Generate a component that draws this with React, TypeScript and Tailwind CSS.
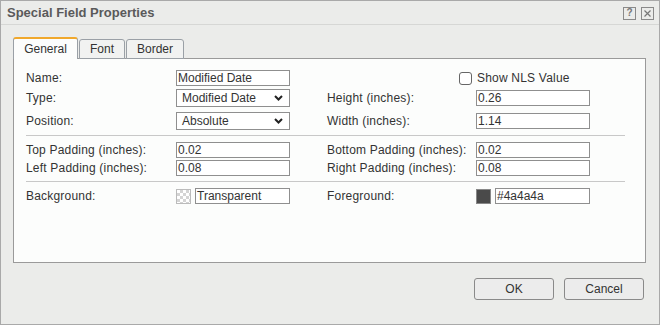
import React from "react";

const font = { fontFamily: "'Liberation Sans', Arial, sans-serif" };

const TextInput: React.FC<{ value: string; width?: string }> = ({ value, width = "w-[114px]" }) => (
  <div className={`${width} h-[16px] border border-[#8f8f8f] bg-white pl-[1px] text-[12px] leading-[14px] text-[#333] whitespace-nowrap`}>
    {value}
  </div>
);

const Select: React.FC<{ value: string }> = ({ value }) => (
  <div className="w-[114px] h-[18px] border border-[#8f8f8f] bg-white pl-[5px] pr-[5px] flex items-center justify-between text-[12px] text-[#333]">
    <span>{value}</span>
    <svg width="9" height="6" viewBox="0 0 9 6" className="mr-[1px]">
      <path d="M1 1l3.5 3.5L8 1" fill="none" stroke="#222" strokeWidth={2} />
    </svg>
  </div>
);

const Label: React.FC<{ text: string; width?: string }> = ({ text, width = "w-[150px]" }) => (
  <div className={`${width} shrink-0 whitespace-nowrap text-[12px] text-[#333] leading-[16px] tracking-[0.2px]`}>{text}</div>
);

const Divider = () => <div className="h-px bg-[#c8c8c8] mr-[1px]" />;

const Gap = () => <div className="w-[37px] shrink-0" />;

export default function App() {
  return (
    <div
      className="w-[660px] h-[325px] bg-[#ebecea] border border-[#a9a9a9] flex flex-col overflow-hidden"
      style={font}
    >
      <div className="h-[24px] shrink-0 border-b border-[#d6d7d5] flex items-center justify-between pl-[6px] pr-[5px]">
        <span className="text-[13px] font-bold text-[#5a5a5a]">Special Field Properties</span>
        <div className="flex gap-[5px] mt-[1px]">
          <div className="w-[13px] h-[13px] border border-[#8a8a8a] flex items-center justify-center text-[10px] font-bold text-[#777] leading-none">?</div>
          <div className="w-[13px] h-[13px] border border-[#8a8a8a] flex items-center justify-center">
            <svg width="7" height="7" viewBox="0 0 7 7">
              <path d="M0.5 0.5l6 6M6.5 0.5l-6 6" stroke="#777" strokeWidth={1.2} />
            </svg>
          </div>
        </div>
      </div>

      <div className="pl-[12px] pr-[13px] pt-[12px]">
        <div className="flex items-end h-[22px] relative z-10">
          <div className="w-[65px] h-[22px] bg-[#fcfdfc] border border-[#9aa0a6] border-b-0 border-t-2 border-t-[#f0a82c] rounded-t-[3px] flex items-center justify-center text-[12px] text-[#333]">
            General
          </div>
          <div className="ml-[1px] w-[46px] h-[20px] bg-[#f1f2f1] border border-[#9aa0a6] rounded-t-[3px] flex items-center justify-center text-[12px] text-[#333]">
            Font
          </div>
          <div className="ml-[1px] w-[58px] h-[20px] bg-[#f1f2f1] border border-[#9aa0a6] rounded-t-[3px] flex items-center justify-center text-[12px] text-[#333]">
            Border
          </div>
        </div>
        <div className="-mt-px h-[205px] bg-[#fcfdfc] border border-[#9a9a9a] pl-[12px] pr-[19px] pt-[11px]">
          <div className="flex items-center h-[16px]">
            <Label text="Name:" />
            <TextInput value="Modified Date" />
            <div className="ml-[169px] flex items-center gap-[5px]">
              <div className="w-[13px] h-[13px] border border-[#666] rounded-[3px] bg-white" />
              <span className="text-[12px] text-[#333] tracking-[0.2px]">Show NLS Value</span>
            </div>
          </div>
          <div className="flex items-center h-[18px] mt-[3px]">
            <Label text="Type:" />
            <Select value="Modified Date" />
            <Gap />
            <Label text="Height (inches):" width="w-[149px]" />
            <TextInput value="0.26" />
          </div>
          <div className="flex items-center h-[18px] mt-[5px]">
            <Label text="Position:" />
            <Select value="Absolute" />
            <Gap />
            <Label text="Width (inches):" width="w-[149px]" />
            <TextInput value="1.14" />
          </div>
          <div className="mt-[5px]">
            <Divider />
          </div>
          <div className="flex items-center h-[16px] mt-[6px]">
            <Label text="Top Padding (inches):" />
            <TextInput value="0.02" />
            <Gap />
            <Label text="Bottom Padding (inches):" width="w-[149px]" />
            <TextInput value="0.02" />
          </div>
          <div className="flex items-center h-[16px] mt-[2px]">
            <Label text="Left Padding (inches):" />
            <TextInput value="0.08" />
            <Gap />
            <Label text="Right Padding (inches):" width="w-[149px]" />
            <TextInput value="0.08" />
          </div>
          <div className="mt-[5px]">
            <Divider />
          </div>
          <div className="flex items-center h-[16px] mt-[6px]">
            <Label text="Background:" />
            <div
              className="w-[15px] h-[15px] border border-[#bbb] shrink-0"
              style={{
                backgroundColor: "#fff",
                backgroundImage:
                  "linear-gradient(45deg,#d4d4d4 25%,transparent 25%,transparent 75%,#d4d4d4 75%),linear-gradient(45deg,#d4d4d4 25%,transparent 25%,transparent 75%,#d4d4d4 75%)",
                backgroundSize: "6px 6px",
                backgroundPosition: "0 0,3px 3px",
              }}
            />
            <div className="ml-[4px]">
              <TextInput value="Transparent" width="w-[95px]" />
            </div>
            <Gap />
            <Label text="Foreground:" width="w-[149px]" />
            <div className="w-[15px] h-[15px] bg-[#4a4a4a] border border-[#888] shrink-0" />
            <div className="ml-[4px]">
              <TextInput value="#4a4a4a" width="w-[95px]" />
            </div>
          </div>
        </div>
      </div>

      <div className="flex justify-end gap-[10px] pr-[15px] mt-[15px]">
        <button className="w-[80px] h-[22px] border border-[#8a8a8a] rounded-[3px] bg-[#ececec] text-[12px] text-[#333]">
          OK
        </button>
        <button className="w-[80px] h-[22px] border border-[#8a8a8a] rounded-[3px] bg-[#ececec] text-[12px] text-[#333]">
          Cancel
        </button>
      </div>
    </div>
  );
}
